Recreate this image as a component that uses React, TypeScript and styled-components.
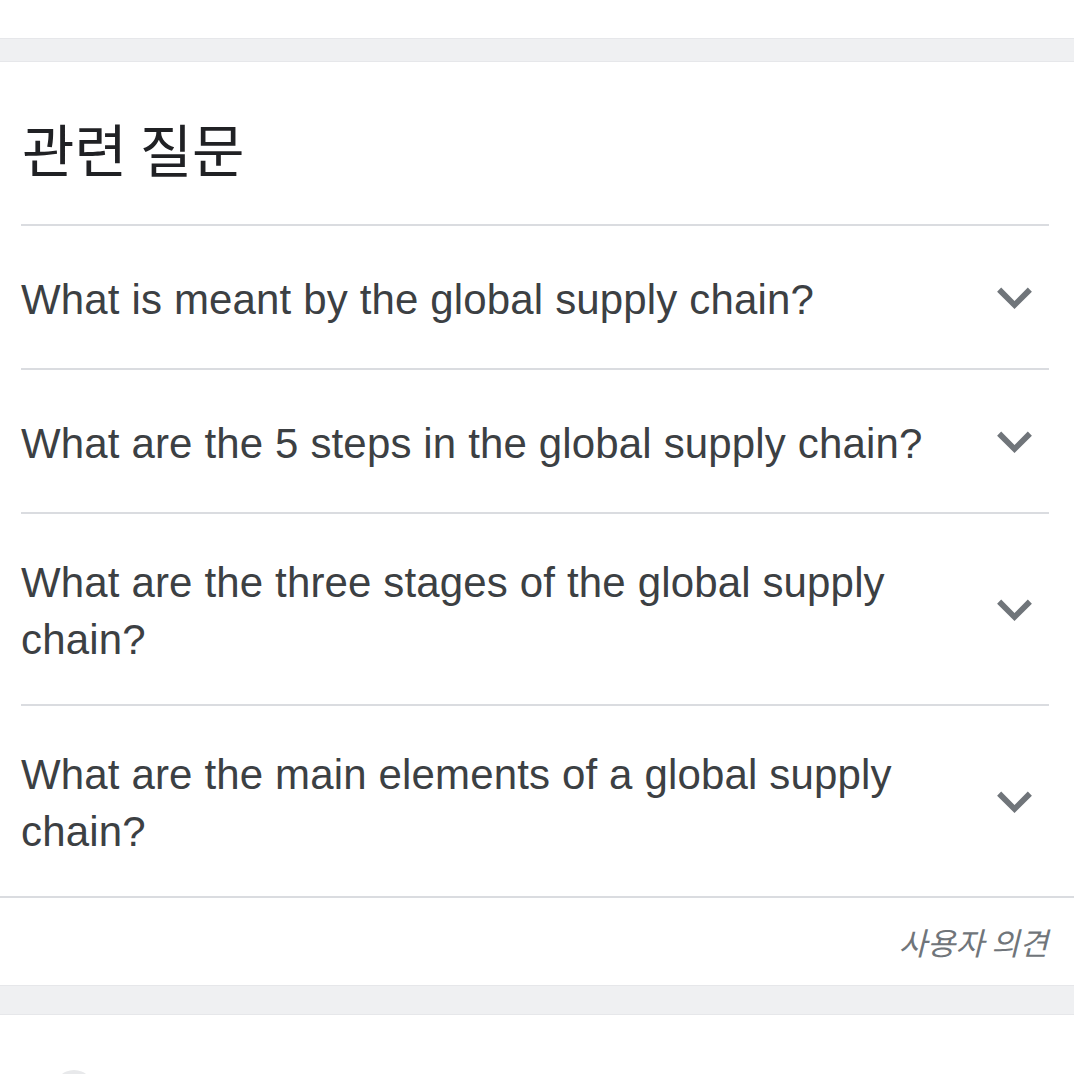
import React from 'react'
import styled, { createGlobalStyle } from 'styled-components'

const GlobalStyle = createGlobalStyle`
  html, body {
    margin: 0;
    padding: 0;
    background: #fff;
  }
  body {
    font-family: "Liberation Sans", "Noto Sans CJK KR", Arial, sans-serif;
  }
`

const Page = styled.div`
  width: 1074px;
  height: 1074px;
  overflow: hidden;
  display: flex;
  flex-direction: column;
  background: #fff;
`

const TopSpace = styled.div`
  height: 38px;
  flex-shrink: 0;
`

const Band = styled.div<{ $h: number }>`
  height: ${(p) => p.$h}px;
  flex-shrink: 0;
  background: #eff0f2;
  border-top: 1px solid #e6e7ea;
  border-bottom: 1px solid #e6e7ea;
`

const Card = styled.div`
  display: flex;
  flex-direction: column;
  flex-shrink: 0;
`

const Inner = styled.div`
  padding: 0 25px 0 21px;
`

const Title = styled.h2`
  margin: 0;
  height: 164px;
  display: flex;
  align-items: center;
  padding-left: 1px;
  padding-top: 8px;
  box-sizing: border-box;
  font-family: "Noto Sans CJK KR", sans-serif;
  font-weight: 400;
  font-size: 57px;
  color: #202124;
  border-bottom: 2px solid #dadce0;
`

const Row = styled.div`
  display: flex;
  align-items: center;
  min-height: 144px;
  padding: 38px 14px 38px 0;
  box-sizing: border-box;
  border-bottom: 2px solid #dadce0;
`

const Question = styled.div`
  flex: 1;
  padding-right: 60px;
  padding-top: 2px;
  margin-bottom: -2px;
  font-size: 42px;
  line-height: 57px;
  letter-spacing: 0.15px;
  color: #3c4043;
`

const Chevron = styled.svg`
  width: 41px;
  height: 29px;
  flex-shrink: 0;
  fill: #70757a;
`

const Footer = styled.div`
  border-top: 2px solid #dadce0;
  height: 87px;
  display: flex;
  align-items: center;
  justify-content: flex-end;
  padding-right: 26px;
  margin-top: -2px;
`

const Feedback = styled.span`
  font-family: "Noto Sans CJK KR", sans-serif;
  font-style: italic;
  font-size: 31px;
  color: #70757a;
`

const NextCard = styled.div`
  flex: 1;
  padding: 55px 0 0 54px;
`

const Avatar = styled.div`
  width: 40px;
  height: 40px;
  border-radius: 50%;
  background: #e8e9eb;
`

const questions = [
  'What is meant by the global supply chain?',
  'What are the 5 steps in the global supply chain?',
  'What are the three stages of the global supply chain?',
  'What are the main elements of a global supply chain?',
]

const ExpandIcon = () => (
  <Chevron viewBox="5 7 14 10">
    <path d="M16.59 8.59L12 13.17 7.41 8.59 6 10l6 6 6-6z" />
  </Chevron>
)

export default function App() {
  return (
    <Page>
      <GlobalStyle />
      <TopSpace />
      <Band $h={22} />
      <Card>
        <Inner>
          <Title>관련 질문</Title>
          {questions.map((q) => (
            <Row key={q}>
              <Question>{q}</Question>
              <ExpandIcon />
            </Row>
          ))}
        </Inner>
        <Footer>
          <Feedback>사용자 의견</Feedback>
        </Footer>
      </Card>
      <Band $h={28} />
      <NextCard>
        <Avatar />
      </NextCard>
    </Page>
  )
}
